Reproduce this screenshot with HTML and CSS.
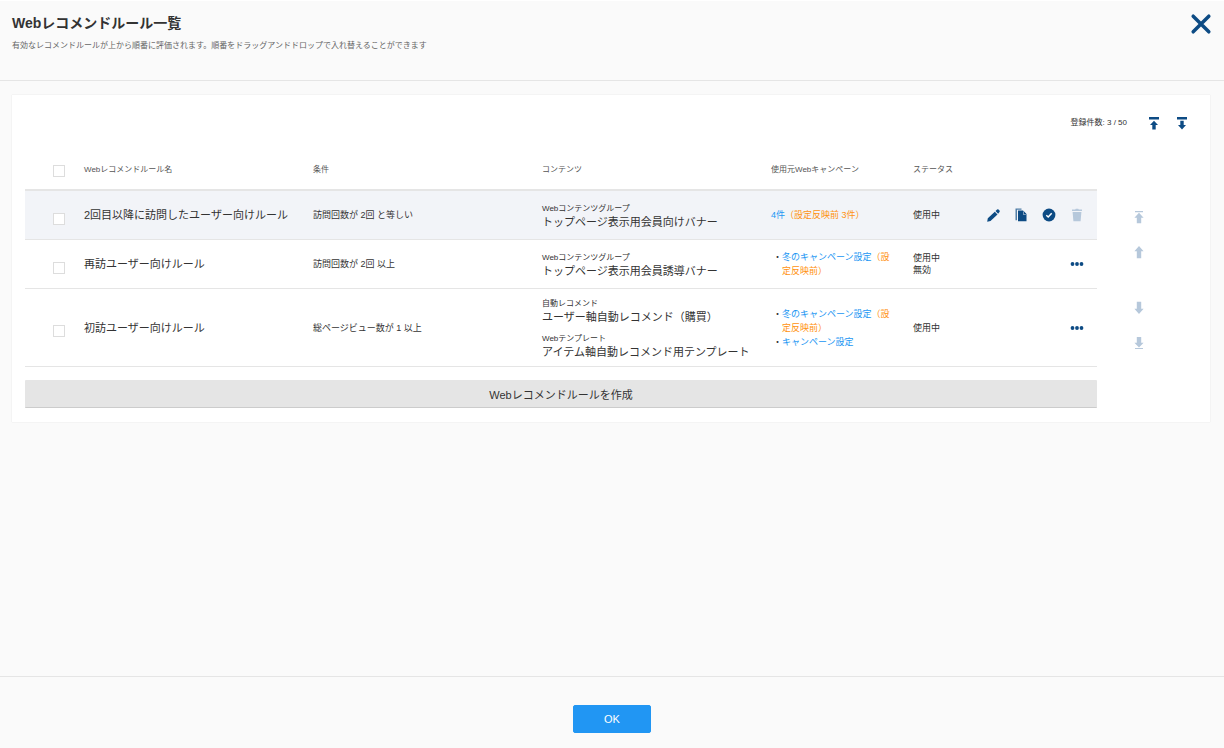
FILE: index.html
```
<!DOCTYPE html>
<html lang="ja">
<head>
    <meta charset="UTF-8">
    <meta name="viewport" content="width=device-width, initial-scale=1.0">
    <title>Webレコメンドルール一覧</title>
    <link rel="stylesheet" href="styles.css">
</head>
<body>
    <header class="page-header">
        <div>
            <h1>Webレコメンドルール一覧</h1>
            <p>有効なレコメンドルールが上から順番に評価されます。順番をドラッグアンドドロップで入れ替えることができます</p>
        </div>
        <button class="icon-button close" aria-label="閉じる">
            <svg viewBox="0 0 20 20"><path d="M2.900 2.900l14.200 14.200M17.100 2.900l-14.200 14.200" fill="none" stroke="currentColor" stroke-width="3.200" stroke-linecap="round"/></svg>
        </button>
    </header>

    <main class="card">
        <div class="toolbar">
            <span class="count">登録件数: 3 / 50</span>
            <button class="icon-button" aria-label="先頭に追加">
                <svg viewBox="0 0 16 16"><path d="M3 2h10v2.500H3zM8 5.700l4 4.300H9.700v4.500H6.300V10H4z"/></svg>
            </button>
            <button class="icon-button" aria-label="末尾に追加">
                <svg viewBox="0 0 16 16"><path d="M3 2h10v2.500H3zM6.300 5.700h3.400V10H12l-4 4.500L4 10h2.300z"/></svg>
            </button>
        </div>

        <div class="content">
            <div class="rules">
                <table>
                    <colgroup>
                        <col class="col-check">
                        <col>
                        <col>
                        <col>
                        <col class="col-campaign">
                        <col class="col-status">
                        <col class="col-actions">
                    </colgroup>
                    <thead>
                        <tr>
                            <th class="check"><input type="checkbox" aria-label="すべて選択"></th>
                            <th>Webレコメンドルール名</th>
                            <th>条件</th>
                            <th>コンテンツ</th>
                            <th>使用元Webキャンペーン</th>
                            <th>ステータス</th>
                            <th></th>
                        </tr>
                    </thead>
                    <tbody>
                        <tr class="active">
                            <td class="check"><input type="checkbox" aria-label="2回目以降に訪問したユーザー向けルール"></td>
                            <td class="name">2回目以降に訪問したユーザー向けルール</td>
                            <td>訪問回数が 2回 と等しい</td>
                            <td>
                                <dl>
                                    <dt>Webコンテンツグループ</dt>
                                    <dd>トップページ表示用会員向けバナー</dd>
                                </dl>
                            </td>
                            <td><a href="#">4件<span class="pending">（設定反映前 3件）</span></a></td>
                            <td>使用中</td>
                            <td>
                                <div class="actions">
                                    <button class="icon-button" aria-label="編集">
                                        <svg viewBox="0 0 16 16"><path d="M2.200 14.700l.6-3.500 7-6.500 2.700 2.800-7 6.500zM10.500 4.100l1.600-1.600q.7-.6 1.400 0l1 1.100q.6.700 0 1.300l-1.400 1.900z"/></svg>
                                    </button>
                                    <button class="icon-button" aria-label="コピー">
                                        <svg viewBox="0 0 16 16"><path d="M2.500 1.500h6v1.200H4v10.500H2.500z" opacity=".7"/><path d="M5 3.500h5l3.500 4v6.800H5z"/><path d="M10 4l3 3.500h-3z" fill="#f2f4f8"/><path d="M10.500 4v3h3z"/></svg>
                                    </button>
                                    <button class="icon-button" aria-label="有効化">
                                        <svg viewBox="0 0 16 16"><circle cx="8" cy="8" r="6.400"/><path d="M5.300 8.300l1.900 1.700 3.500-3.700" fill="none" stroke="#fff" stroke-width="1.500"/></svg>
                                    </button>
                                    <button class="icon-button muted" aria-label="削除" disabled>
                                        <svg viewBox="0 0 16 16"><path d="M3 2.500h3.200l.6-.8h2.400l.6.800H13v1.600H3zM3.600 5h8.800l-.8 9.300H4.400z"/></svg>
                                    </button>
                                </div>
                            </td>
                        </tr>
                        <tr>
                            <td class="check"><input type="checkbox" aria-label="再訪ユーザー向けルール"></td>
                            <td class="name">再訪ユーザー向けルール</td>
                            <td>訪問回数が 2回 以上</td>
                            <td>
                                <dl>
                                    <dt>Webコンテンツグループ</dt>
                                    <dd>トップページ表示用会員誘導バナー</dd>
                                </dl>
                            </td>
                            <td>
                                <ul>
                                    <li><a href="#">冬のキャンペーン設定<span class="pending">（設定反映前）</span></a></li>
                                </ul>
                            </td>
                            <td>使用中<br>無効</td>
                            <td>
                                <div class="actions">
                                    <button class="icon-button" aria-label="メニュー">
                                        <svg viewBox="0 0 16 16"><circle cx="3.500" cy="8" r="1.900"/><circle cx="8" cy="8" r="1.900"/><circle cx="12.500" cy="8" r="1.900"/></svg>
                                    </button>
                                </div>
                            </td>
                        </tr>
                        <tr>
                            <td class="check"><input type="checkbox" aria-label="初訪ユーザー向けルール"></td>
                            <td class="name">初訪ユーザー向けルール</td>
                            <td>総ページビュー数が 1 以上</td>
                            <td>
                                <dl>
                                    <dt>自動レコメンド</dt>
                                    <dd>ユーザー軸自動レコメンド（購買）</dd>
                                    <dt>Webテンプレート</dt>
                                    <dd>アイテム軸自動レコメンド用テンプレート</dd>
                                </dl>
                            </td>
                            <td>
                                <ul>
                                    <li><a href="#">冬のキャンペーン設定<span class="pending">（設定反映前）</span></a></li>
                                    <li><a href="#">キャンペーン設定</a></li>
                                </ul>
                            </td>
                            <td>使用中</td>
                            <td>
                                <div class="actions">
                                    <button class="icon-button" aria-label="メニュー">
                                        <svg viewBox="0 0 16 16"><circle cx="3.500" cy="8" r="1.900"/><circle cx="8" cy="8" r="1.900"/><circle cx="12.500" cy="8" r="1.900"/></svg>
                                    </button>
                                </div>
                            </td>
                        </tr>
                    </tbody>
                </table>
                <button class="create">Webレコメンドルールを作成</button>
            </div>

            <div class="sort">
                <div class="sort-group">
                    <button class="icon-button muted" aria-label="一番上へ" disabled>
                        <svg viewBox="0 0 16 16"><path d="M4 2h8v1.200H4zM8 3.700l4.600 5h-2.400v5.600H5.800V8.700H3.400z"/></svg>
                    </button>
                    <button class="icon-button muted" aria-label="上へ" disabled>
                        <svg viewBox="0 0 16 16"><path d="M8 2l4.600 5.300h-2.400v7H5.800v-7H3.400z"/></svg>
                    </button>
                </div>
                <div class="sort-group">
                    <button class="icon-button muted" aria-label="下へ" disabled>
                        <svg viewBox="0 0 16 16"><path d="M8 14l4.600-5.300h-2.400v-7H5.800v7H3.400z"/></svg>
                    </button>
                    <button class="icon-button muted" aria-label="一番下へ" disabled>
                        <svg viewBox="0 0 16 16"><path d="M4 12.900h8v1.200H4zM8 12.500l4.600-4.800h-2.400V1.900H5.800v5.800H3.400z"/></svg>
                    </button>
                </div>
            </div>
        </div>
    </main>

    <footer class="page-footer">
        <button class="ok">OK</button>
    </footer>
</body>
</html>
```
FILE: styles.css
```
* {
    box-sizing: border-box;
}
body {
    display: flex;
    flex-direction: column;
    min-height: 100vh;
    margin: 0;
    background-color: #fafafa;
    color: #333;
    font-family: "Liberation Sans", "Noto Sans CJK JP", sans-serif;
    font-size: 9px;
    line-height: 12px;
}
h1, p, dl, dd, ul {
    margin: 0;
    padding: 0;
}
button {
    font-family: inherit;
    cursor: pointer;
}
a {
    color: #2196f3;
    text-decoration: none;
}

/* header */
.page-header {
    display: flex;
    justify-content: space-between;
    align-items: flex-start;
    min-height: 81px;
    padding: 12px;
    border-top: 1px solid #fff;
    border-bottom: 1px solid #e5e5e5;
}
h1 {
    font-size: 14px;
    line-height: 20px;
}
.page-header p {
    margin-top: 7px;
    color: #666;
    font-size: 8px;
}

/* icons */
.icon-button {
    width: 16px;
    height: 16px;
    padding: 0;
    border: none;
    background: none;
    color: #0d4b84;
}
.icon-button svg {
    display: block;
    width: 100%;
    height: 100%;
    fill: currentColor;
}
.close {
    width: 22px;
    height: 22px;
}
.muted {
    color: #b6c8db;
    cursor: default;
}

/* rule list */
.card {
    margin: 14px 14px 14px 12px;
    padding-bottom: 14px;
    background-color: #fff;
    box-shadow: 0 0 1px rgba(0, 0, 0, 0.15);
}
.toolbar {
    display: flex;
    justify-content: flex-end;
    align-items: center;
    gap: 12px;
    height: 55px;
    padding: 0 20px;
}
.count {
    margin-right: 7px;
    font-size: 8px;
}
.content {
    display: flex;
    padding: 0 30px 0 13px;
}
.rules {
    flex: 1;
}
table {
    width: 100%;
    table-layout: fixed;
    border-collapse: separate;
    border-spacing: 0;
}
.col-check {
    width: 59px;
}
.col-campaign {
    width: 142px;
}
.col-status {
    width: 65px;
}
.col-actions {
    width: 119px;
}
th {
    height: 41px;
    padding: 0;
    border-bottom: 2px solid #e5e5e5;
    color: #555;
    font-size: 8px;
    font-weight: normal;
    text-align: left;
}
td {
    height: 49px;
    padding: 7px 0;
    border-bottom: 1px solid #e5e5e5;
}
td:nth-child(5) {
    padding-right: 20px;
}
.active {
    background-color: #f2f4f8;
}
.check {
    padding: 7px 0 0 28px;
}
th.check {
    padding-top: 3px;
}
.check input {
    display: block;
    appearance: none;
    width: 12px;
    height: 12px;
    margin: 0;
    border: 1px solid #ddd;
    background-color: #fff;
}
.check input:checked {
    background-color: #2196f3;
}
.name, dd {
    font-size: 11px;
    line-height: 14px;
}
dl {
    padding-top: 2px;
}
dt {
    font-size: 8px;
}
dd + dt {
    margin-top: 9px;
}
ul {
    list-style: none;
}
li {
    padding-left: 11px;
    line-height: 14px;
    text-indent: -9px;
}
li::before {
    content: "・";
}
.pending {
    color: #ff9210;
}
.actions {
    display: flex;
    justify-content: flex-end;
    gap: 12px;
    padding-right: 12px;
}
.create {
    width: 100%;
    height: 28px;
    margin-top: 13px;
    border: none;
    border-bottom: 1px solid #ccc;
    border-radius: 1px;
    background-color: #e5e5e5;
    color: #333;
    font-size: 11px;
}

/* sort arrows */
.sort {
    display: flex;
    flex-direction: column;
    align-items: center;
    gap: 40px;
    width: 83px;
    padding-top: 59px;
}
.sort-group {
    display: flex;
    flex-direction: column;
    gap: 19px;
}

/* footer */
.page-footer {
    display: flex;
    justify-content: center;
    margin-top: auto;
    padding: 28px 0 15px;
    border-top: 1px solid #e5e5e5;
}
.ok {
    width: 78px;
    height: 28px;
    border: 1px solid #2196f3;
    border-radius: 2px;
    background-color: #2196f3;
    color: #fff;
    font-size: 11px;
}
```
